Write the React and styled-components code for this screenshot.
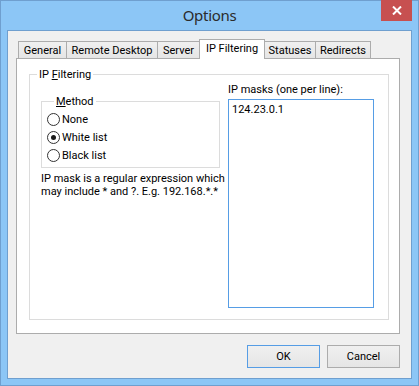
import React, { useState } from "react";
import styled, { createGlobalStyle, css } from "styled-components";

const GlobalStyle = createGlobalStyle`
  html, body {
    margin: 0;
    padding: 0;
    background: #ffffff;
  }
  body {
    font-family: Roboto, "Liberation Sans", sans-serif;
    font-size: 11px;
    color: #000000;
  }
`;

const Window = styled.div`
  position: relative;
  width: 419px;
  height: 386px;
  box-sizing: border-box;
  background: #8cc6f6;
  border: 1px solid #6f9fcf;
  padding: 0 6px 6px 6px;
  display: flex;
  flex-direction: column;
`;

const TitleBar = styled.div`
  height: 29px;
  display: flex;
  align-items: center;
  justify-content: center;
  font-family: "Noto Sans", "Open Sans", sans-serif;
  font-size: 15px;
  letter-spacing: -0.3px;
  color: #2b2b2b;
  padding-bottom: 1px;
  box-sizing: border-box;
`;

const CloseButton = styled.div`
  position: absolute;
  top: -1px;
  right: 6px;
  width: 31px;
  height: 21px;
  background: #c75050;
  display: flex;
  align-items: center;
  justify-content: center;
`;

const Client = styled.div`
  flex: 1;
  border: 1px solid #6f9fcf;
  background: #f0f0f0;
  padding: 8px 11px 0 8px;
  display: flex;
  flex-direction: column;
`;

const TabStrip = styled.div`
  height: 19px;
  display: flex;
  align-items: flex-end;
  padding-left: 2px;
`;

const Tab = styled.div`
  box-sizing: border-box;
  width: ${({ $w }) => $w}px;
  height: 17px;
  border: 1px solid #acacac;
  border-bottom: none;
  background: linear-gradient(#f0f0f0, #e5e5e5);
  display: flex;
  align-items: center;
  justify-content: center;
  padding-top: 1px;
  white-space: nowrap;
  & + & {
    margin-left: -1px;
  }

  ${({ $active }) =>
    $active &&
    css`
      position: relative;
      z-index: 1;
      height: 20px;
      margin-bottom: -1px;
      background: #ffffff;
      padding-top: 0;
      padding-bottom: 3px;
    `}
`;

const Panel = styled.div`
  box-sizing: border-box;
  width: 384px;
  height: 276px;
  border: 1px solid #acacac;
  background: #ffffff;
  padding: 9px 10px 13px 12px;
  display: flex;
`;

const Group = styled.fieldset`
  flex: 1;
  margin: 0;
  padding: 0;
  min-width: 0;
  border: 1px solid #dcdcdc;
  border-radius: 0;
`;

const Legend = styled.legend`
  margin-left: 7px;
  padding: 0 2px;
  line-height: 13px;
  height: 13px;
`;

const GroupBody = styled.div`
  display: flex;
  gap: 8px;
  padding: 0 14px 0 11px;
`;

const LeftCol = styled.div`
  width: 179px;
  display: flex;
  flex-direction: column;
  padding-top: 14px;
`;

const RightCol = styled.div`
  width: 146px;
  display: flex;
  flex-direction: column;
  padding-top: 2px;
`;

const MethodBox = styled.fieldset`
  margin: 0;
  padding: 2px 0 2px 5px;
  height: 73px;
  box-sizing: border-box;
  border: 1px solid #dcdcdc;
  border-radius: 0;
`;

const RadioRow = styled.label`
  height: 18px;
  display: flex;
  align-items: center;
  gap: 2px;
  line-height: 13px;
`;

const RadioCircle = styled.span`
  box-sizing: border-box;
  width: 13px;
  height: 13px;
  border-radius: 50%;
  border: 1px solid #333333;
  background: #ffffff;
  display: flex;
  align-items: center;
  justify-content: center;

  &::after {
    content: "";
    width: 5px;
    height: 5px;
    border-radius: 50%;
    background: ${({ $checked }) => ($checked ? "#1a1a1a" : "transparent")};
  }
`;

const Hint = styled.div`
  margin-top: 4px;
  line-height: 13px;
  white-space: nowrap;
`;

const FieldLabel = styled.div`
  line-height: 13px;
`;

const MaskArea = styled.div`
  box-sizing: border-box;
  margin-top: 3px;
  width: 146px;
  height: 209px;
  border: 1px solid #569de5;
  background: #ffffff;
  padding: 3px 3px;
  line-height: 13px;
`;

const ButtonRow = styled.div`
  display: flex;
  justify-content: flex-end;
  gap: 7px;
  margin-top: 11px;
`;

const Button = styled.button`
  box-sizing: border-box;
  width: 73px;
  height: 23px;
  padding: 0;
  border: 1px solid ${({ $default }) => ($default ? "#569de5" : "#acacac")};
  background: linear-gradient(#f0f0f0, #e5e5e5);
  font-family: Roboto, "Liberation Sans", sans-serif;
  font-size: 11px;
  color: #000000;
`;

const tabs = [
  { label: "General", w: 49 },
  { label: "Remote Desktop", w: 92 },
  { label: "Server", w: 43 },
  { label: "IP Filtering", w: 66 },
  { label: "Statuses", w: 52 },
  { label: "Redirects", w: 56 },
];

const methods = ["None", "White list", "Black list"];

export default function App() {
  const [method, setMethod] = useState(1);

  return (
    <>
      <GlobalStyle />
      <Window>
        <TitleBar>Options</TitleBar>
        <CloseButton>
          <svg width="10" height="9" viewBox="0 0 10 9">
            <path d="M1 0.5 L9 8.5 M9 0.5 L1 8.5" stroke="#ffffff" strokeWidth="2" />
          </svg>
        </CloseButton>
        <Client>
          <TabStrip>
            {tabs.map((t) => (
              <Tab key={t.label} $w={t.w} $active={t.label === "IP Filtering"}>
                {t.label}
              </Tab>
            ))}
          </TabStrip>
          <Panel>
            <Group>
              <Legend>
                IP <u>F</u>iltering
              </Legend>
              <GroupBody>
                <LeftCol>
                  <MethodBox>
                    <Legend>
                      <u>M</u>ethod
                    </Legend>
                    {methods.map((m, i) => (
                      <RadioRow key={m} onClick={() => setMethod(i)}>
                        <RadioCircle $checked={method === i} />
                        {m}
                      </RadioRow>
                    ))}
                  </MethodBox>
                  <Hint>
                    IP mask is a regular expression which
                    <br />
                    may include * and ?. E.g. 192.168.*.*
                  </Hint>
                </LeftCol>
                <RightCol>
                  <FieldLabel>IP masks (one per line):</FieldLabel>
                  <MaskArea>124.23.0.1</MaskArea>
                </RightCol>
              </GroupBody>
            </Group>
          </Panel>
          <ButtonRow>
            <Button $default>OK</Button>
            <Button>Cancel</Button>
          </ButtonRow>
        </Client>
      </Window>
    </>
  );
}
